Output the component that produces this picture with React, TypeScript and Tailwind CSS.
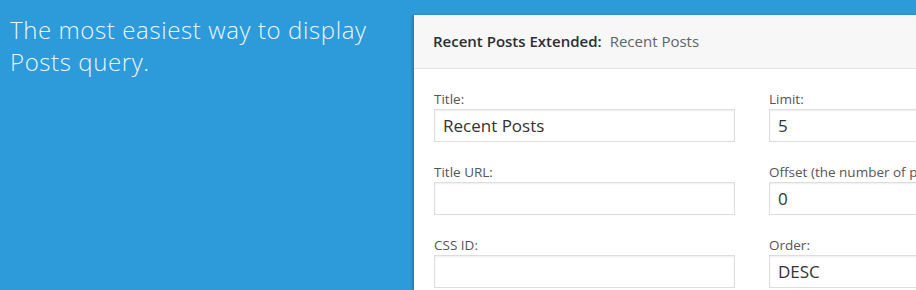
export default function App() {
  const rows = [
    [
      { label: 'Title:', value: 'Recent Posts' },
      { label: 'Limit:', value: '5' },
    ],
    [
      { label: 'Title URL:', value: '' },
      { label: 'Offset (the number of posts to skip):', value: '0' },
    ],
    [
      { label: 'CSS ID:', value: '' },
      { label: 'Order:', value: 'DESC' },
    ],
  ]

  return (
    <div className="flex h-[290px] w-[916px] overflow-hidden bg-[#2d9ad9]">
      {/* Tagline */}
      <div className="w-[414px] shrink-0 pl-[10px] pt-[14px]">
        <p
          className="text-[24px] leading-[32px] font-light tracking-[0.6px] text-[#eaf5fc]"
          style={{ fontFamily: '"Open Sans", sans-serif' }}
        >
          The most easiest way to display
          <br />
          Posts query.
        </p>
      </div>

      {/* Widget panel */}
      <div
        className="mt-[15px] w-[680px] shrink-0 bg-white shadow-[-2px_0_2px_rgba(0,40,90,0.25)]"
        style={{ fontFamily: '"Open Sans", sans-serif' }}
      >
        <div className="flex h-[54px] items-center border-b border-[#e3e3e3] bg-[#f7f7f7] pl-[19px] text-[15px] text-[#5f6468]">
          <span className="font-semibold text-[#2b2f33]">Recent Posts Extended:</span>
          <span className="ml-[8px]">Recent Posts</span>
        </div>

        <div className="pl-[20px] pt-[21px]">
          {rows.map((row, i) => (
            <div key={i} className="mb-[21px] flex gap-[34px]">
              {row.map((f) => (
                <div key={f.label} className="w-[301px] shrink-0">
                  <div className="mb-[1px] h-[18px] whitespace-nowrap text-[13.5px] leading-[18px] text-[#555]">
                    {f.label}
                  </div>
                  <div className="flex h-[33px] items-center border border-[#dddddd] px-[8px] text-[17px] text-[#333] shadow-[inset_0_1px_2px_rgba(0,0,0,0.07)]">
                    {f.value}
                  </div>
                </div>
              ))}
            </div>
          ))}
        </div>
      </div>
    </div>
  )
}
